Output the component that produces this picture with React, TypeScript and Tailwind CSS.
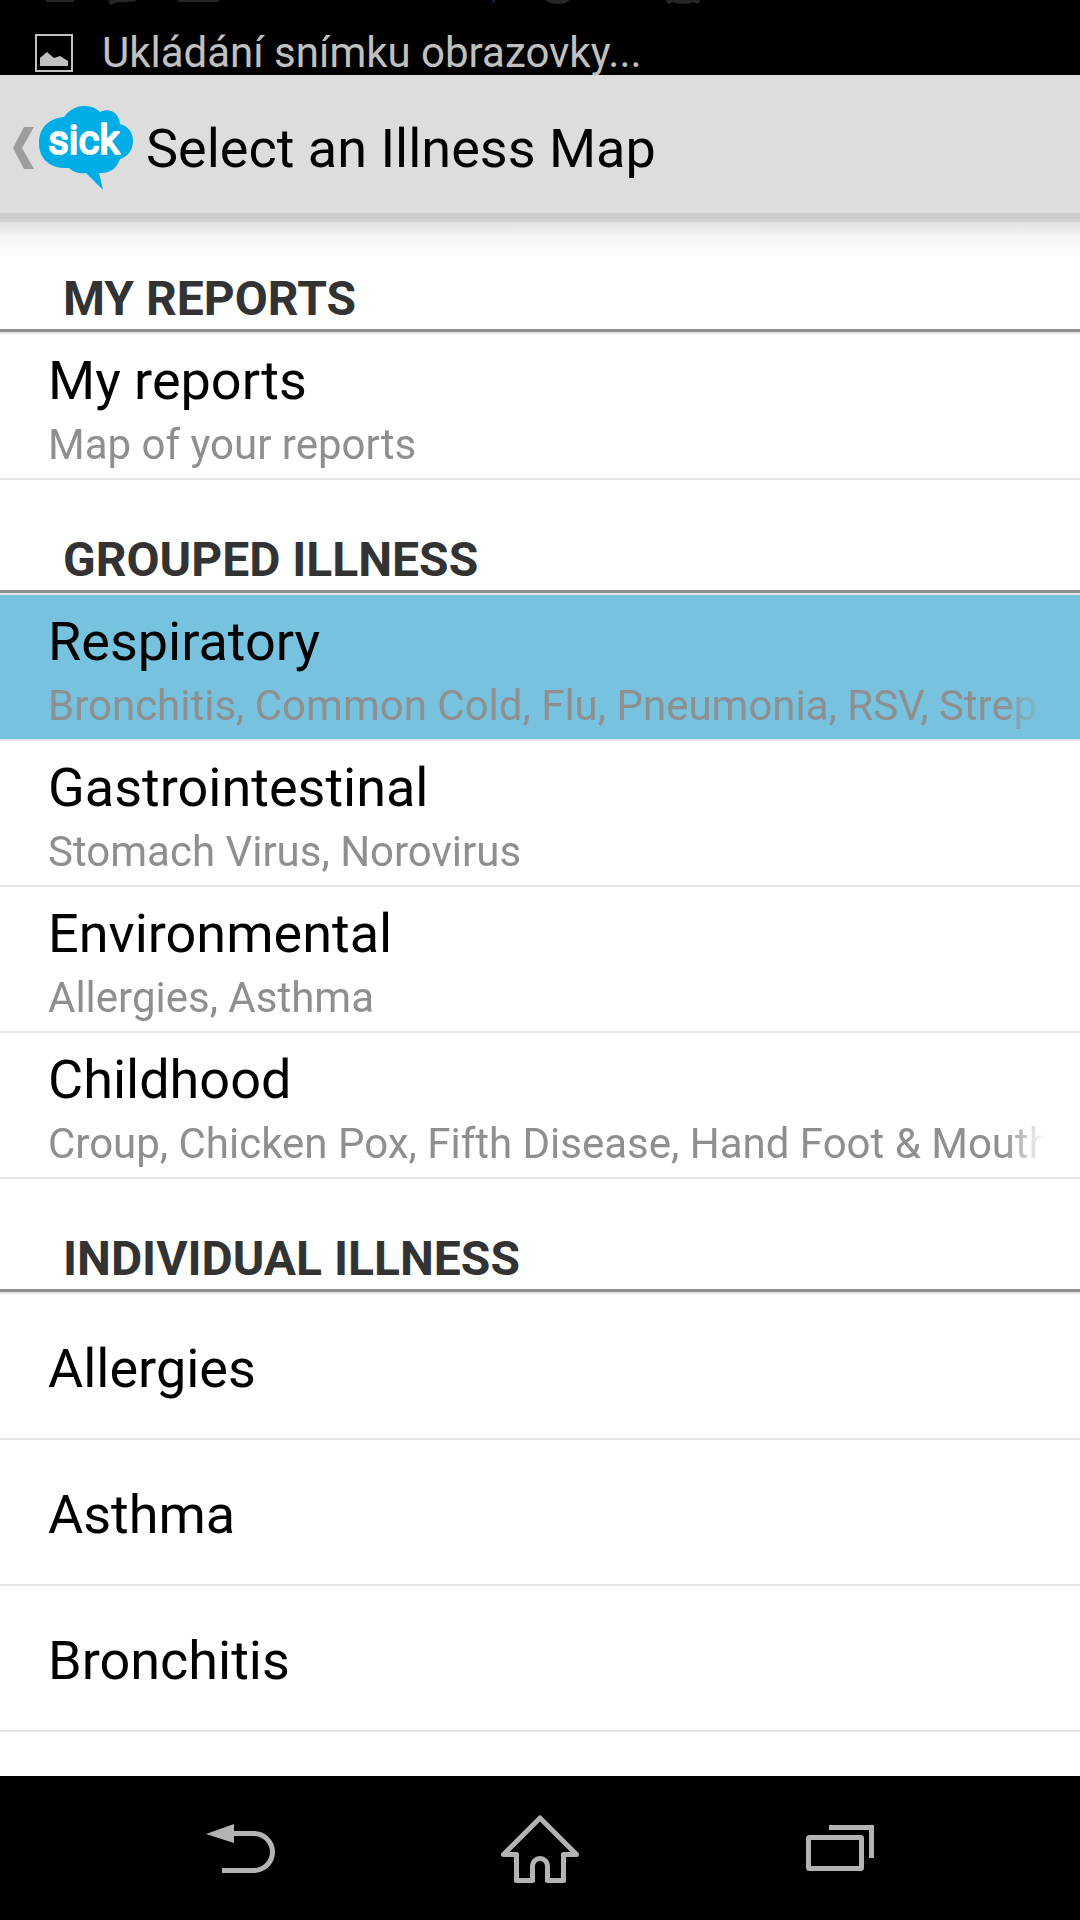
import clsx from "clsx";

type Item = {
  title: string;
  subtitle?: string;
  selected?: boolean;
};

type Section = {
  heading: string;
  items: Item[];
};

const sections: Section[] = [
  {
    heading: "My Reports",
    items: [{ title: "My reports", subtitle: "Map of your reports" }],
  },
  {
    heading: "Grouped Illness",
    items: [
      {
        title: "Respiratory",
        subtitle: "Bronchitis, Common Cold, Flu, Pneumonia, RSV, Strep",
        selected: true,
      },
      { title: "Gastrointestinal", subtitle: "Stomach Virus, Norovirus" },
      { title: "Environmental", subtitle: "Allergies, Asthma" },
      {
        title: "Childhood",
        subtitle: "Croup, Chicken Pox, Fifth Disease, Hand Foot & Mouth",
      },
    ],
  },
  {
    heading: "Individual Illness",
    items: [{ title: "Allergies" }, { title: "Asthma" }, { title: "Bronchitis" }],
  },
];

export default function App() {
  return (
    <div className="flex min-h-screen flex-col bg-white font-['Roboto',sans-serif] text-black">
      <StatusBar />
      <ActionBar />
      <main className="flex-1">
        {sections.map((section) => (
          <IllnessSection key={section.heading} section={section} />
        ))}
      </main>
      <NavigationBar />
    </div>
  );
}

function StatusBar() {
  return (
    <div className="relative flex h-[75px] items-start overflow-hidden bg-black pl-[35px]">
      {/* Older notification icons scrolling off the top */}
      <svg className="absolute left-0 top-0" width="720" height="8" fill="#262626" aria-hidden="true">
        <path d="M46 0h28v2H46zM109 0h28q-4 3-18 2l-9 3zM177 0h43q-1 2-4 2h-35q-3 0-4-2z" />
        <path d="M491 0h4v3z" fill="#0b2a3d" />
        <path d="M545 0h25q-4 4-12 4t-13-4zM666 0h34l-1 3q-3 2-5-1-11 4-22 0-2 3-5 1z" />
      </svg>
      <svg className="mt-[34px] shrink-0" width="38" height="38" viewBox="0 0 38 38" aria-hidden="true">
        <rect x="1" y="1" width="36" height="36" fill="none" stroke="#c0c0c0" strokeWidth="2" />
        <path d="M5 32V24l7-6 7 6 6-2 8 5v5z" fill="#c0c0c0" />
      </svg>
      <p className="ml-[29px] mt-7 whitespace-nowrap text-[42px] leading-[50px] text-[#c0c0c0]">
        Ukládání snímku obrazovky...
      </p>
    </div>
  );
}

function ActionBar() {
  return (
    <header className="relative h-[144px] border-b-[6px] border-[#cdcdcd] bg-[#dddddd]">
      <div className="flex h-full items-center pt-2.5">
        <button type="button" aria-label="Navigate up" className="flex shrink-0 items-center pl-3">
          <svg width="22" height="84" viewBox="0 0 22 84" aria-hidden="true">
            <path d="M12 20h10L10 41l12 21H12L1 41z" fill="#9d9d9d" />
          </svg>
          <SickLogo />
        </button>
        <h1 className="ml-3 whitespace-nowrap text-[54px] leading-[64px]">Select an Illness Map</h1>
      </div>
      {/* Shadow cast over the list */}
      <div className="pointer-events-none absolute inset-x-0 top-full mt-[6px] h-[3px] bg-[#d2d2d2]" />
      <div className="pointer-events-none absolute inset-x-0 top-full mt-[9px] h-[36px] bg-linear-to-b from-[#e0e0e0] via-[#f4f4f4] via-40% to-white" />
    </header>
  );
}

function SickLogo() {
  return (
    <svg className="ml-1" width="96" height="88" viewBox="0 0 96 88" role="img" aria-label="sick">
      <path
        d="M26 12C31 5 38 1 46 1c7 0 12 2 16 6 10-5 19 1 20 12 8 2 13 8 13 17 0 10-6 16-13 18-3 9-10 15-21 14l4 17-17-17c-8 1-13-1-17-5C13 64 1 55 1 38 1 22 12 13 26 12z"
        fill="#00ade6"
      />
      <text
        x="46"
        y="49"
        textAnchor="middle"
        fill="#fff"
        stroke="#fff"
        strokeWidth="2"
        strokeLinejoin="round"
        className="font-['Roboto',sans-serif] text-[40px]"
      >
        sick
      </text>
    </svg>
  );
}

function IllnessSection({ section }: { section: Section }) {
  return (
    <section>
      <div className="border-b-2 border-[#e5e5e5]">
        <h2 className="flex h-[113px] items-end border-b-[3px] border-[#8f8f8f] px-[63px] text-[48px] font-bold uppercase leading-[60px] text-[#333333]">
          {section.heading}
        </h2>
      </div>
      <ul>
        {section.items.map((item) => (
          <li key={item.title} className="border-b-2 border-[#e5e5e5]">
            <IllnessRow item={item} />
          </li>
        ))}
      </ul>
    </section>
  );
}

function IllnessRow({ item }: { item: Item }) {
  return (
    <button
      type="button"
      className={clsx(
        "flex h-[144px] w-full flex-col justify-center pl-12 pr-9 pt-1.5 text-left",
        item.selected && "bg-[#77c3df]"
      )}
    >
      <span className="text-[54px] leading-[72px]">{item.title}</span>
      {item.subtitle && (
        <span className="w-full overflow-hidden whitespace-nowrap mask-r-from-[calc(100%-40px)] mask-r-to-100% text-[42px] leading-[56px] text-[#8f8f8f]">
          {item.subtitle}
        </span>
      )}
    </button>
  );
}

function NavigationBar() {
  return (
    <nav className="flex h-[144px] items-center justify-center bg-black text-[#b3b3b3]">
      <button type="button" aria-label="Back" className="flex w-[300px] justify-center">
        <svg width="160" height="144" viewBox="0 0 160 144" aria-hidden="true">
          <path d="M46 58 74 48v19z" fill="currentColor" />
          <path d="M74 57.500h20a18.500 18.500 0 0 1 0 37H62" fill="none" stroke="currentColor" strokeWidth="5" />
        </svg>
      </button>
      <button type="button" aria-label="Home" className="flex w-[300px] justify-center">
        <svg width="160" height="144" viewBox="0 0 160 144" aria-hidden="true">
          <path
            d="M80 42 43.500 78.500H56.500V104.500H72.500V90a7.500 7.500 0 0 1 15 0V104.500H103.500V78.500H116.500z"
            fill="none"
            stroke="currentColor"
            strokeWidth="5"
            strokeLinejoin="round"
          />
        </svg>
      </button>
      <button type="button" aria-label="Recent apps" className="flex w-[300px] justify-center">
        <svg width="160" height="144" viewBox="0 0 160 144" aria-hidden="true">
          <rect x="48.500" y="61.500" width="53" height="31" rx="1" fill="none" stroke="currentColor" strokeWidth="5" />
          <path d="M69 51.500h42.500V82" fill="none" stroke="currentColor" strokeWidth="5" />
        </svg>
      </button>
    </nav>
  );
}
